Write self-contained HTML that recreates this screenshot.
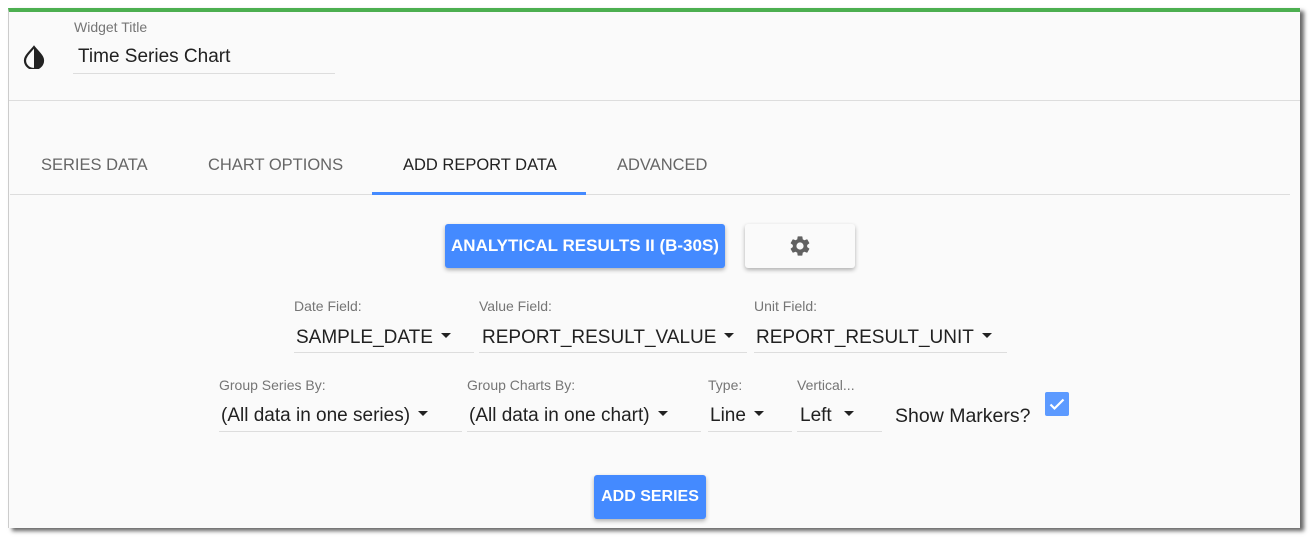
<!DOCTYPE html>
<html><head><meta charset="utf-8"><style>
*{margin:0;padding:0;box-sizing:border-box}
body{width:1316px;height:545px;background:#fff;font-family:"Liberation Sans",sans-serif;position:relative;overflow:hidden}
.panel{position:absolute;left:8px;top:8px;width:1292px;height:520px;background:#fafafa;border-top:4px solid #4caf50;border-left:1px solid #ccc;box-shadow:4px 3px 4px #666}
.a{position:absolute;white-space:nowrap}
.lbl{font-size:14px;color:#757575}
.val{font-size:19px;color:#212121}
.ul{position:absolute;height:1px;background:#ddd}
.caret{display:inline-block;width:0;height:0;border-left:5px solid transparent;border-right:5px solid transparent;border-top:5px solid #222;vertical-align:middle;margin-left:8px;position:relative;top:-2px}
.tab{font-size:16.5px;color:#666}
.btn{position:absolute;background:#448aff;color:#fff;font-weight:bold;font-size:16px;border-radius:3px;box-shadow:0 2px 4px rgba(0,0,0,.3);display:flex;align-items:center;justify-content:center}
</style></head><body>
<div class="panel"></div>
<svg class="a" style="left:23px;top:45px" width="22" height="24" viewBox="0 0 22 24"><path d="M11 2 C7 7 2 11 2 15.5 A9 8.5 0 0 0 20 15.5 C20 11 15 7 11 2Z" fill="none" stroke="#222" stroke-width="2.2"/><path d="M11 2 C15 7 20 11 20 15.5 A9 8.5 0 0 1 11 24Z" fill="#222"/></svg>
<div class="a lbl" style="left:74px;top:19px">Widget Title</div>
<div class="a val" style="left:78px;top:46px">Time Series Chart</div>
<div class="ul" style="left:73px;top:73px;width:262px"></div>
<div class="ul" style="left:9px;top:100px;width:1291px;background:#ddd"></div>

<div class="a tab" style="left:41px;top:156px">SERIES DATA</div>
<div class="a tab" style="left:208px;top:156px">CHART OPTIONS</div>
<div class="a tab" style="left:403px;top:156px;color:#222">ADD REPORT DATA</div>
<div class="a tab" style="left:617px;top:156px">ADVANCED</div>
<div class="ul" style="left:10px;top:194px;width:1280px"></div>
<div class="a" style="left:372px;top:192px;width:214px;height:3px;background:#448aff"></div>

<div class="btn" style="left:445px;top:224px;width:280px;height:44px;font-size:17px">ANALYTICAL RESULTS II (B-30S)</div>
<div class="btn" style="left:745px;top:224px;width:110px;height:44px;background:#fafafa;box-shadow:0 2px 4px rgba(0,0,0,.3)">
<svg width="24" height="24" viewBox="0 0 24 24"><path fill="#616161" d="M19.14 12.94c.04-.3.06-.61.06-.94 0-.32-.02-.64-.07-.94l2.03-1.58a.49.49 0 0 0 .12-.61l-1.920-3.32a.49.49 0 0 0-.59-.22l-2.39.96c-.5-.38-1.03-.7-1.620-.94l-.36-2.54a.48.48 0 0 0-.48-.41h-3.84a.48.48 0 0 0-.47.41l-.36 2.54c-.59.24-1.13.57-1.62.94l-2.39-.96a.49.49 0 0 0-.59.22L2.74 8.87a.47.47 0 0 0 .12.61l2.03 1.58c-.05.3-.09.63-.09.94s.02.64.07.94l-2.03 1.58a.49.49 0 0 0-.12.61l1.92 3.32c.12.22.37.29.59.22l2.39-.96c.5.38 1.03.7 1.62.94l.36 2.54c.05.24.24.41.48.41h3.84c.24 0 .44-.17.47-.41l.36-2.54c.59-.24 1.13-.56 1.62-.94l2.39.96c.22.08.47 0 .59-.22l1.92-3.32a.47.47 0 0 0-.12-.61l-2.01-1.58zM12 15.6A3.6 3.6 0 1 1 12 8.4a3.6 3.6 0 0 1 0 7.2z"/></svg></div>

<div class="a lbl" style="left:294px;top:298px">Date Field:</div>
<div class="a val" style="left:296px;top:327px">SAMPLE_DATE<span class="caret"></span></div>
<div class="ul" style="left:294px;top:352px;width:180px"></div>
<div class="a lbl" style="left:479px;top:298px">Value Field:</div>
<div class="a val" style="left:482px;top:327px">REPORT_RESULT_VALUE<span class="caret"></span></div>
<div class="ul" style="left:479px;top:352px;width:268px"></div>
<div class="a lbl" style="left:754px;top:298px">Unit Field:</div>
<div class="a val" style="left:756px;top:327px">REPORT_RESULT_UNIT<span class="caret"></span></div>
<div class="ul" style="left:754px;top:352px;width:253px"></div>

<div class="a lbl" style="left:219px;top:377px">Group Series By:</div>
<div class="a val" style="left:221px;top:405px">(All data in one series)<span class="caret"></span></div>
<div class="ul" style="left:219px;top:431px;width:243px"></div>
<div class="a lbl" style="left:467px;top:377px">Group Charts By:</div>
<div class="a val" style="left:469px;top:405px">(All data in one chart)<span class="caret"></span></div>
<div class="ul" style="left:467px;top:431px;width:234px"></div>
<div class="a lbl" style="left:708px;top:377px">Type:</div>
<div class="a val" style="left:710px;top:405px">Line<span class="caret"></span></div>
<div class="ul" style="left:708px;top:431px;width:84px"></div>
<div class="a lbl" style="left:797px;top:377px">Vertical...</div>
<div class="a val" style="left:800px;top:405px">Left<span class="caret" style="margin-left:12px"></span></div>
<div class="ul" style="left:797px;top:431px;width:85px"></div>
<div class="a val" style="left:895px;top:405px;font-size:19.5px">Show Markers?</div>
<div class="a" style="left:1045px;top:392px;width:24px;height:24px;background:#5c9aff;border-radius:2px">
<svg width="24" height="24" viewBox="0 0 24 24"><path d="M5.5 12.5l4 4 9-9" fill="none" stroke="#fff" stroke-width="2.2"/></svg></div>

<div class="btn" style="left:594px;top:475px;width:112px;height:44px">ADD SERIES</div>
</body></html>
